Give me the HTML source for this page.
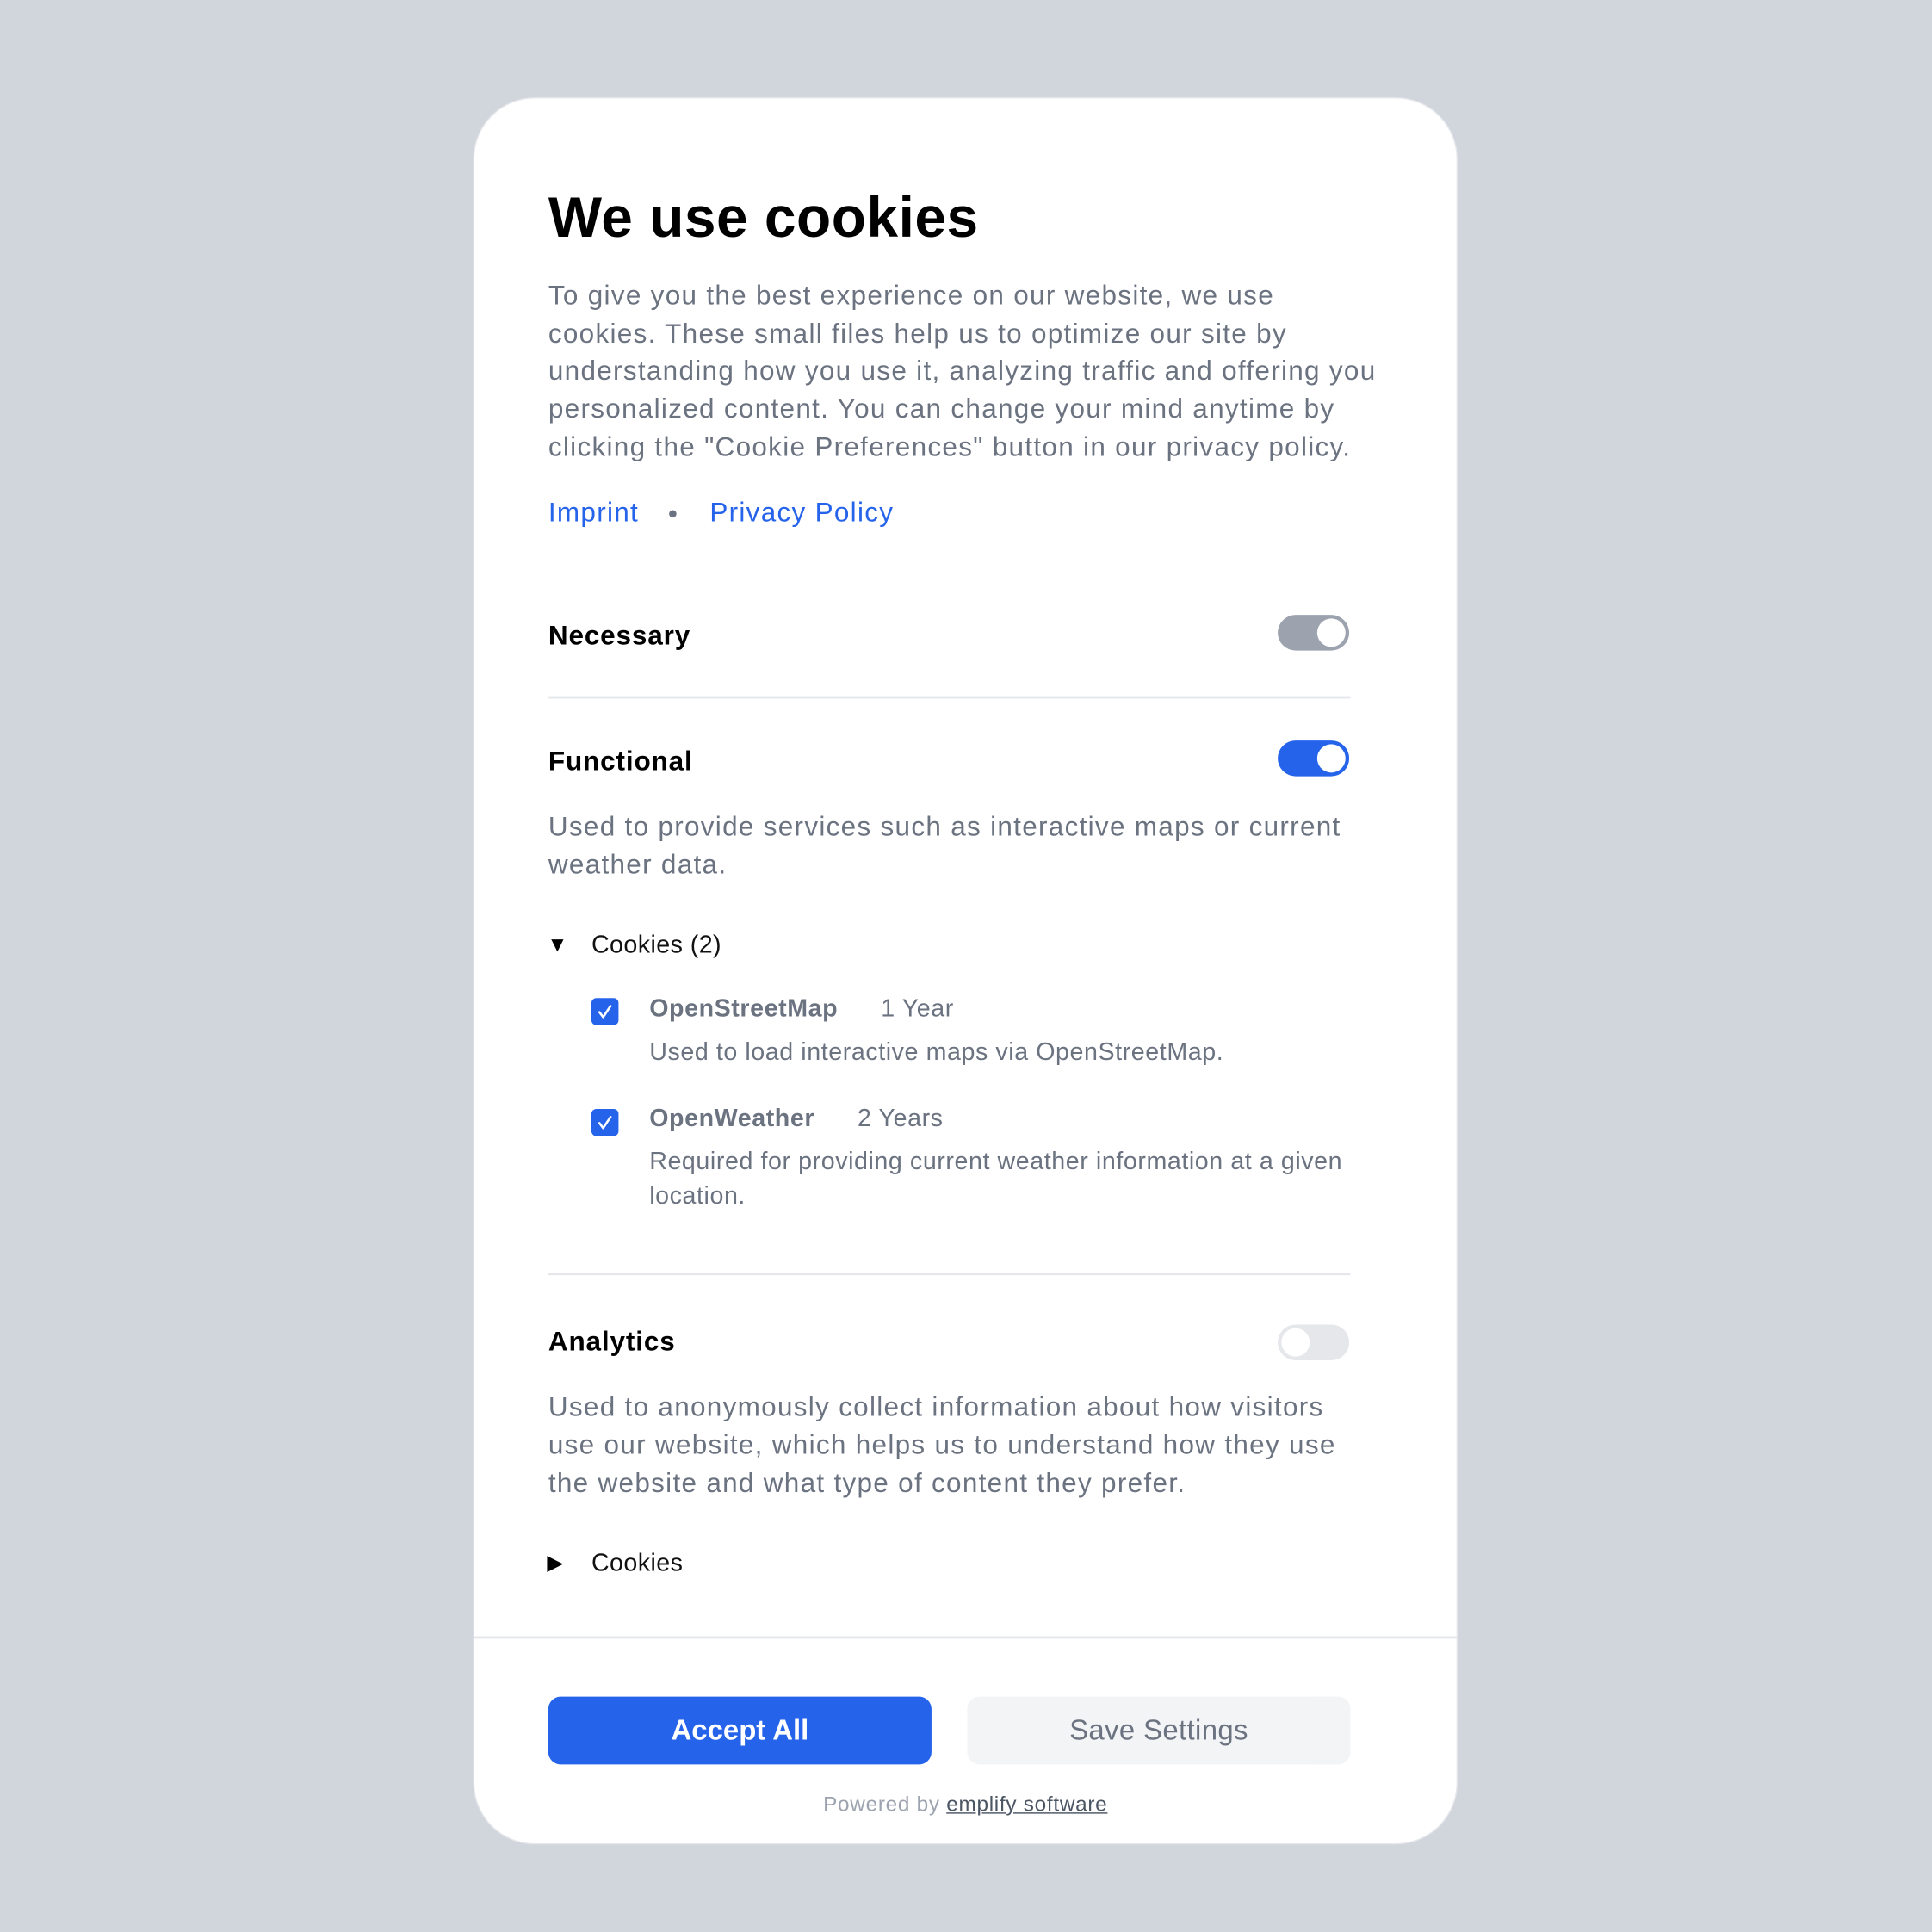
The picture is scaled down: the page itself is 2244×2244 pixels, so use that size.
<!DOCTYPE html>
<html><head><meta charset="utf-8"><style>
html,body{margin:0;padding:0;background:#d1d5dc;width:2244px;height:2244px;overflow:hidden}
#w{position:absolute;left:0;top:0;width:1568px;height:1568px;transform:scale(1.431122);transform-origin:0 0;font-family:"Liberation Sans",sans-serif}
.card{position:absolute;left:384px;top:79px;width:797px;height:1416px;background:#fff;border:1px solid #e5e7eb;border-radius:50px}
.t{position:absolute;white-space:nowrap;line-height:30px}
.p{font-size:22px;color:#6b7280;letter-spacing:0.9px}
.h{font-size:22px;font-weight:bold;color:#000;letter-spacing:0.6px}
.hr{position:absolute;left:445px;width:651px;height:1.5px;background:#e5e7eb}
.tg{position:absolute;left:1037px;width:58px;height:29px;border-radius:15px}
.tg i{position:absolute;top:3px;width:23px;height:23px;border-radius:50%;background:#fff}
.cb{position:absolute;left:480px;width:22px;height:22px;border-radius:4px;background:#2563eb}
.s{font-size:20px;letter-spacing:0.4px}
</style></head><body><div id="w">
<div class="card"></div>
<div class="t" style="left:445px;top:148px;font-size:46px;font-weight:900;color:#000;line-height:56px;letter-spacing:0.35px">We use cookies</div>
<div class="t p" style="left:445px;top:225px">To give you the best experience on our website, we use</div>
<div class="t p" style="left:445px;top:256px">cookies. These small files help us to optimize our site by</div>
<div class="t p" style="left:445px;top:286px">understanding how you use it, analyzing traffic and offering you</div>
<div class="t p" style="left:445px;top:317px">personalized content. You can change your mind anytime by</div>
<div class="t p" style="left:445px;top:348px">clicking the "Cookie Preferences" button in our privacy policy.</div>
<div class="t p" style="left:445px;top:401px;color:#2563eb">Imprint</div>
<div style="position:absolute;left:543px;top:414px;width:6px;height:6px;border-radius:50%;background:#6b7280"></div>
<div class="t p" style="left:576px;top:401px;color:#2563eb">Privacy Policy</div>

<div class="t h" style="left:445px;top:501px">Necessary</div>
<div class="tg" style="top:499px;background:#9ca3af"><i style="left:32px"></i></div>
<div class="hr" style="top:565px"></div>

<div class="t h" style="left:445px;top:603px">Functional</div>
<div class="tg" style="top:601px;background:#2563eb"><i style="left:32px"></i></div>
<div class="t p" style="left:445px;top:656px">Used to provide services such as interactive maps or current</div>
<div class="t p" style="left:445px;top:687px">weather data.</div>
<div class="t s" style="left:444px;top:752px;color:#000;font-size:17px">▼</div>
<div class="t s" style="left:480px;top:752px;color:#111;letter-spacing:0.3px">Cookies (2)</div>

<div class="cb" style="top:810px"><svg width="22" height="22" viewBox="0 0 22 22"><path d="M6.5 11.5l3 4 6-9" fill="none" stroke="#fff" stroke-width="1.8" stroke-linecap="round" stroke-linejoin="round"/></svg></div>
<div class="t s" style="left:527px;top:804px;color:#6b7280;font-weight:bold">OpenStreetMap</div>
<div class="t s" style="left:715px;top:804px;color:#6b7280">1 Year</div>
<div class="t s" style="left:527px;top:839px;color:#6b7280">Used to load interactive maps via OpenStreetMap.</div>

<div class="cb" style="top:900px"><svg width="22" height="22" viewBox="0 0 22 22"><path d="M6.5 11.5l3 4 6-9" fill="none" stroke="#fff" stroke-width="1.8" stroke-linecap="round" stroke-linejoin="round"/></svg></div>
<div class="t s" style="left:527px;top:893px;color:#6b7280;font-weight:bold">OpenWeather</div>
<div class="t s" style="left:696px;top:893px;color:#6b7280">2 Years</div>
<div class="t s" style="left:527px;top:928px;color:#6b7280">Required for providing current weather information at a given</div>
<div class="t s" style="left:527px;top:956px;color:#6b7280">location.</div>
<div class="hr" style="top:1033px"></div>

<div class="t h" style="left:445px;top:1074px">Analytics</div>
<div class="tg" style="top:1075px;background:#e5e7eb"><i style="left:3px"></i></div>
<div class="t p" style="left:445px;top:1127px">Used to anonymously collect information about how visitors</div>
<div class="t p" style="left:445px;top:1158px">use our website, which helps us to understand how they use</div>
<div class="t p" style="left:445px;top:1189px">the website and what type of content they prefer.</div>
<div class="t s" style="left:444px;top:1254px;color:#000;font-size:17px">▶</div>
<div class="t s" style="left:480px;top:1254px;color:#111;letter-spacing:0.3px">Cookies</div>

<div style="position:absolute;left:385px;top:1328px;width:797px;height:1.5px;background:#e5e7eb"></div>
<div style="position:absolute;left:445px;top:1377px;width:311px;height:55px;border-radius:10px;background:#2563eb;color:#fff;font-size:23px;font-weight:900;text-align:center;line-height:55px">Accept All</div>
<div style="position:absolute;left:785px;top:1377px;width:311px;height:55px;border-radius:10px;background:#f3f4f6;color:#6b7280;font-size:23px;text-align:center;line-height:55px;letter-spacing:0.25px">Save Settings</div>
<div class="t" style="left:384px;width:799px;text-align:center;top:1453px;line-height:24px;font-size:17px;color:#9ca3af;letter-spacing:0.5px">Powered by <span style="color:#4b5563;text-decoration:underline">emplify software</span></div>
</div></body></html>
